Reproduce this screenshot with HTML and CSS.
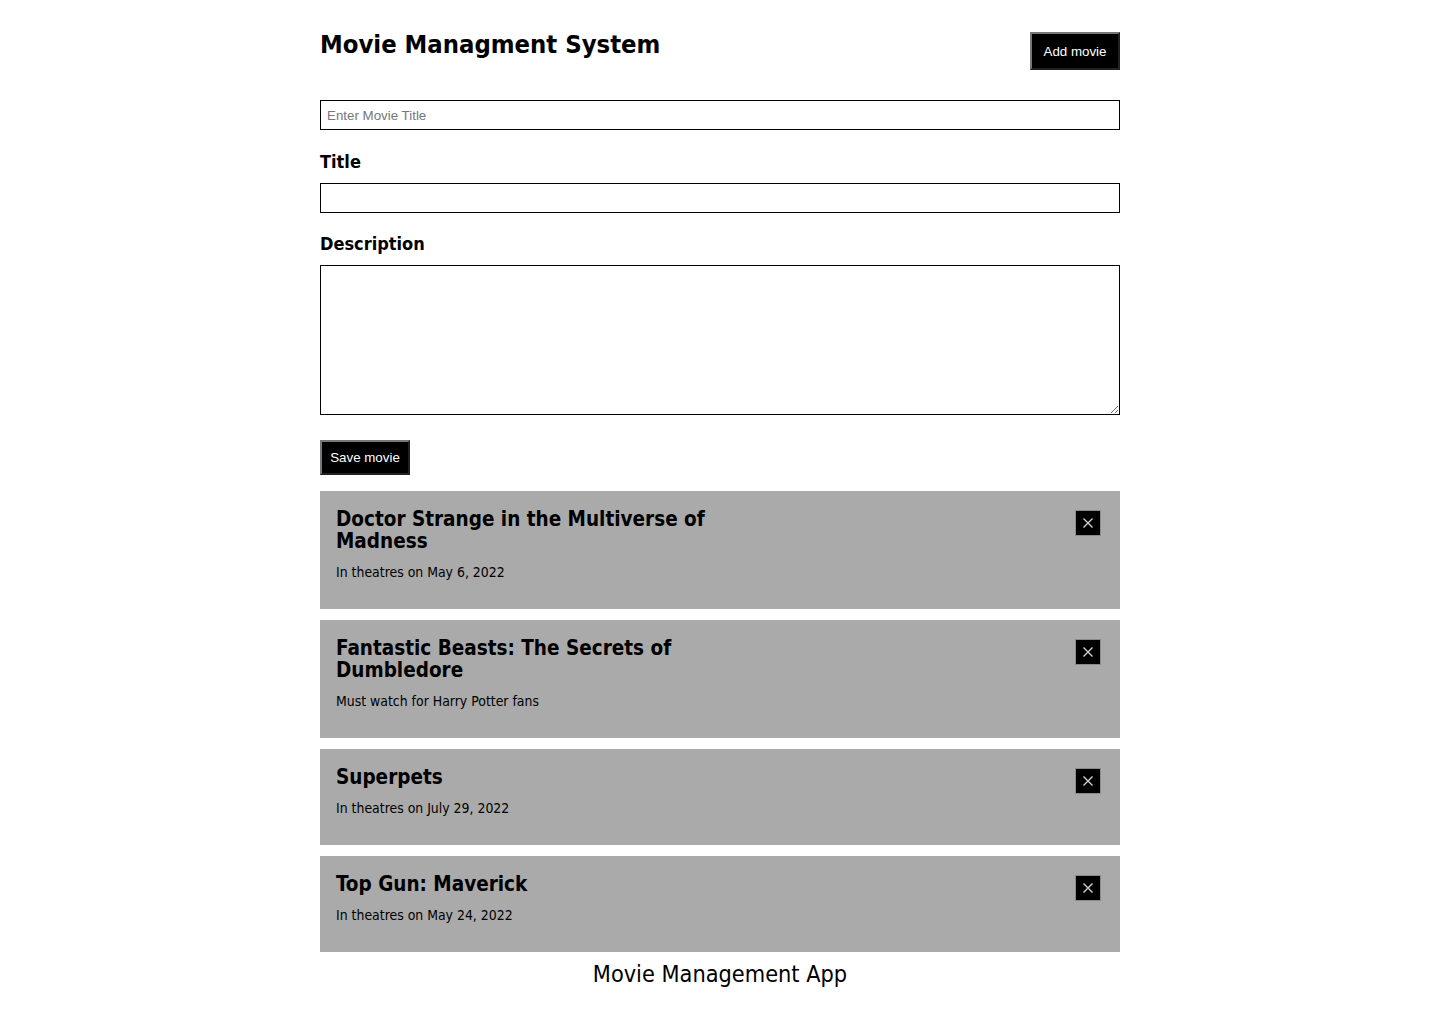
FILE: index.html
```html
<!DOCTYPE html>
<html>
<head>
<meta charset="utf-8">
<link rel="stylesheet" href="styles.css">
</head>
<body>
<div class="app">
  <header class="header">
    <h1 class="title">Movie Managment System</h1>
    <button class="btn btn-add">Add movie</button>
  </header>
  <input class="field search" type="text" placeholder="Enter Movie Title">
  <form class="form">
    <label class="label">Title</label>
    <input class="field" type="text">
    <label class="label label-desc">Description</label>
    <textarea class="field area"></textarea>
    <button class="btn btn-save" type="button">Save movie</button>
  </form>
  <div class="list">
    <div class="card">
      <div class="card-body">
        <h2 class="card-title">Doctor Strange in the Multiverse of Madness</h2>
        <p class="card-text">In theatres on May 6, 2022</p>
      </div>
      <button class="close" aria-label="Delete"><svg class="x" viewBox="0 0 12 12" width="12" height="12"><path d="M1.5 1.5 L10.5 10.5 M10.5 1.5 L1.5 10.5"/></svg></button>
    </div>
    <div class="card">
      <div class="card-body">
        <h2 class="card-title">Fantastic Beasts: The Secrets of Dumbledore</h2>
        <p class="card-text">Must watch for Harry Potter fans</p>
      </div>
      <button class="close" aria-label="Delete"><svg class="x" viewBox="0 0 12 12" width="12" height="12"><path d="M1.5 1.5 L10.5 10.5 M10.5 1.5 L1.5 10.5"/></svg></button>
    </div>
    <div class="card">
      <div class="card-body">
        <h2 class="card-title">Superpets</h2>
        <p class="card-text">In theatres on July 29, 2022</p>
      </div>
      <button class="close" aria-label="Delete"><svg class="x" viewBox="0 0 12 12" width="12" height="12"><path d="M1.5 1.5 L10.5 10.5 M10.5 1.5 L1.5 10.5"/></svg></button>
    </div>
    <div class="card">
      <div class="card-body">
        <h2 class="card-title">Top Gun: Maverick</h2>
        <p class="card-text">In theatres on May 24, 2022</p>
      </div>
      <button class="close" aria-label="Delete"><svg class="x" viewBox="0 0 12 12" width="12" height="12"><path d="M1.5 1.5 L10.5 10.5 M10.5 1.5 L1.5 10.5"/></svg></button>
    </div>
  </div>
  <footer class="footer">Movie Management App</footer>
</div>
</body>
</html>
```
FILE: styles.css
```css
html, body {
  margin: 0;
  padding: 0;
  background: #fff;
}
body {
  font-family: "DejaVu Sans Condensed", "DejaVu Sans", sans-serif;
  color: #000;
}
.app {
  width: 800px;
  margin: 0 auto;
  padding-top: 31px;
}
.header {
  display: flex;
  justify-content: space-between;
  align-items: flex-start;
  margin-bottom: 30px;
}
.title {
  margin: 0;
  font-size: 25.4px;
  line-height: 26px;
  font-weight: bold;
}
.btn {
  font-family: "Liberation Sans", Arial, sans-serif;
  font-size: 13.33px;
  color: #fff;
  background: #000;
  border: 2px outset #767676;
  cursor: pointer;
}
.btn-add {
  width: 90px;
  height: 38px;
  margin-top: 1px;
}
.field {
  display: block;
  box-sizing: border-box;
  width: 800px;
  height: 30px;
  margin: 0;
  border: 1px solid #000;
  padding: 2px 6px;
  font-family: "Liberation Sans", Arial, sans-serif;
  font-size: 13.33px;
}
.field::placeholder {
  color: #777;
}
.form {
  display: flex;
  flex-direction: column;
  align-items: flex-start;
}
.label {
  display: block;
  margin: 21px 0 10px;
  font-size: 18px;
  line-height: 22px;
  font-weight: bold;
}
.label-desc {
  margin-top: 20px;
}
.area {
  height: 150px;
  resize: vertical;
}
.btn-save {
  margin-top: 25px;
  width: 90px;
  height: 35px;
}
.list {
  display: flex;
  flex-direction: column;
  gap: 11px;
  margin-top: 16px;
}
.card {
  display: flex;
  justify-content: space-between;
  align-items: flex-start;
  background: #aaa;
  padding: 17px 19px 16px 16px;
}
.card-body {
  max-width: 384px;
}
.card-title {
  margin: 0;
  font-size: 20.5px;
  line-height: 22px;
  font-weight: bold;
}
.card-text {
  margin: 12px 0;
  font-size: 13.9px;
  line-height: 17px;
}
.close {
  display: flex;
  align-items: center;
  justify-content: center;
  box-sizing: border-box;
  width: 26px;
  height: 26px;
  margin-top: 2px;
  padding: 0;
  border: 1px solid #8a8a8a;
  background: #000;
  cursor: pointer;
}
.x {
  display: block;
  fill: none;
  stroke: #d0d0d0;
  stroke-width: 1.4;
}
.footer {
  text-align: center;
  font-size: 23.3px;
  line-height: 30px;
  margin-top: 7px;
}
```
